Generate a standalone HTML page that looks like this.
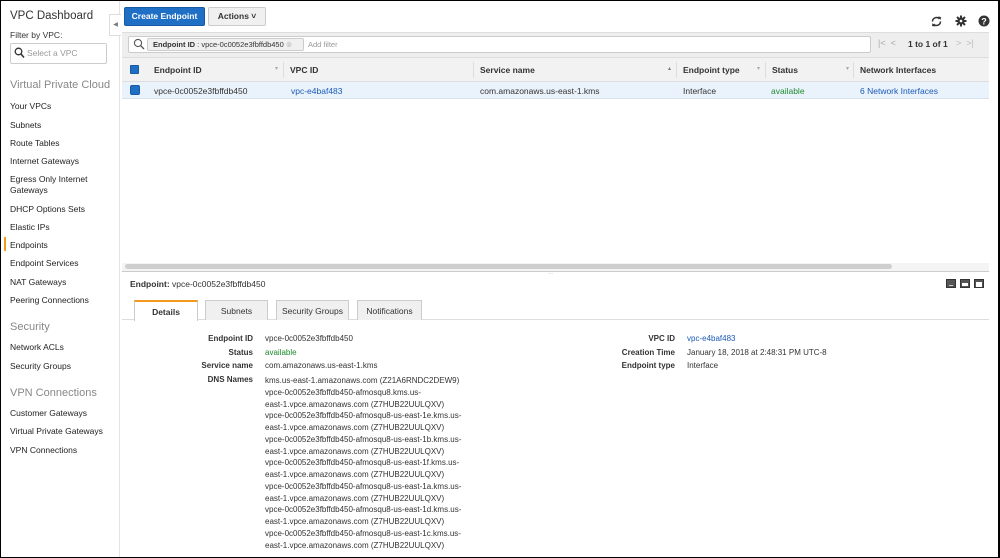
<!DOCTYPE html>
<html><head><style>
*{margin:0;padding:0;box-sizing:border-box}
body{width:1000px;height:558px;overflow:hidden;background:#fff;font-family:"Liberation Sans",sans-serif;color:#222;position:relative}
.a{position:absolute;white-space:nowrap}
.frame{position:absolute;left:0;top:0;width:1000px;height:558px;border:1px solid #000;border-right-width:2px;pointer-events:none}
.nav{font-size:8.5px;color:#222;left:10px}
.hd{font-size:11px;color:#888;left:10px}
.lnk{color:#1a5ab8}
.th{font-size:8.5px;font-weight:bold;color:#333}
.lbl{font-size:8px;font-weight:bold;color:#333;text-align:right;width:120px}
.val{font-size:8px;color:#333}
.tab{position:absolute;top:300px;height:20px;border:1px solid #ccc;border-bottom:none;background:#f0f0f0;font-size:8.5px;text-align:center;line-height:20px;color:#333}
</style></head><body>
<!-- sidebar -->
<div class="a" style="left:0;top:0;width:120px;height:558px;border-right:1px solid #e3e3e3"></div>
<div class="a" style="left:10px;top:10px;font-size:11.5px;color:#333">VPC Dashboard</div>
<div class="a" style="left:10px;top:30px;font-size:8.5px;color:#333">Filter by VPC:</div>
<div class="a" style="left:10px;top:43px;width:97px;height:21px;border:1px solid #ccc;border-radius:2px;font-size:8.5px;color:#999;line-height:19px;padding-left:16px">Select a VPC</div>
<svg class="a" style="left:14px;top:47px" width="11" height="12"><circle cx="4.5" cy="4.5" r="3.3" fill="none" stroke="#333" stroke-width="1.3"/><line x1="7" y1="7" x2="10" y2="10.5" stroke="#333" stroke-width="1.6"/></svg>
<div class="a hd" style="top:79px">Virtual Private Cloud</div>
<div class="a nav" style="top:101px">Your VPCs</div>
<div class="a nav" style="top:120px">Subnets</div>
<div class="a nav" style="top:138px">Route Tables</div>
<div class="a nav" style="top:156px">Internet Gateways</div>
<div class="a nav" style="top:174px;line-height:11px;white-space:normal;width:100px">Egress Only Internet Gateways</div>
<div class="a nav" style="top:204px">DHCP Options Sets</div>
<div class="a nav" style="top:222px">Elastic IPs</div>
<div class="a" style="left:4px;top:237px;width:2px;height:14px;background:#f29a1f"></div>
<div class="a nav" style="top:240px">Endpoints</div>
<div class="a nav" style="top:258px">Endpoint Services</div>
<div class="a nav" style="top:277px">NAT Gateways</div>
<div class="a nav" style="top:295px">Peering Connections</div>
<div class="a hd" style="top:321px">Security</div>
<div class="a nav" style="top:342px">Network ACLs</div>
<div class="a nav" style="top:361px">Security Groups</div>
<div class="a hd" style="top:387px">VPN Connections</div>
<div class="a nav" style="top:408px">Customer Gateways</div>
<div class="a nav" style="top:426px">Virtual Private Gateways</div>
<div class="a nav" style="top:445px">VPN Connections</div>
<!-- collapse -->
<div class="a" style="left:109px;top:14px;width:12px;height:22px;background:#fff;border:1px solid #ddd;border-right:none;font-size:6px;color:#777;line-height:20px;text-align:center">◀</div>
<!-- toolbar -->
<div class="a" style="left:124px;top:7px;width:81px;height:19px;background:#1f6fc5;border:1px solid #175aa3;border-radius:2px;color:#fff;font-size:8.5px;font-weight:bold;text-align:center;line-height:17px">Create Endpoint</div>
<div class="a" style="left:208px;top:7px;width:58px;height:19px;background:#f0f0f0;border:1px solid #ccc;border-radius:2px;color:#333;font-size:8.5px;font-weight:bold;text-align:center;line-height:17px">Actions ˅</div>
<svg class="a" style="left:930px;top:15px" width="13" height="13"><path d="M2.5 6.5a4 4 0 0 1 7-2.6M10.5 6.5a4 4 0 0 1-7 2.6" fill="none" stroke="#333" stroke-width="1.5"/><path d="M8 1.5l3 .5-.5 3zM5 11.5l-3-.5.5-3z" fill="#333"/></svg>
<svg class="a" style="left:955px;top:15px" width="12" height="12"><circle cx="6" cy="6" r="3.6" fill="#333"/><path d="M6 0.5v11M0.5 6h11M2 2l8 8M10 2l-8 8" stroke="#333" stroke-width="2"/><circle cx="6" cy="6" r="1.3" fill="#fff"/></svg>
<svg class="a" style="left:978px;top:15px" width="12" height="12"><circle cx="6" cy="6" r="5.5" fill="#333"/><text x="6" y="9.3" font-size="9" font-weight="bold" fill="#fff" text-anchor="middle" font-family="Liberation Sans">?</text></svg>
<!-- filter bar -->
<div class="a" style="left:122px;top:32px;width:867px;height:25px;background:#eeeeee;border-top:1px solid #ddd"></div>
<div class="a" style="left:128px;top:36px;width:743px;height:17px;background:#fff;border:1px solid #ccc;border-radius:2px"></div>
<svg class="a" style="left:133px;top:38px" width="12" height="12"><circle cx="5" cy="5" r="3.6" fill="none" stroke="#555" stroke-width="1.1"/><line x1="7.7" y1="7.7" x2="11" y2="11" stroke="#555" stroke-width="1.3"/></svg>
<div class="a" style="left:147px;top:38px;width:157px;height:13px;background:#f0f0f0;border:1px solid #ccc;border-radius:2px;font-size:7.5px;line-height:11px;padding-left:5px;color:#333"><b>Endpoint ID</b> : vpce-0c0052e3fbffdb450 <span style="color:#bbb">⊗</span></div>
<div class="a" style="left:308px;top:40px;font-size:7.5px;color:#999">Add filter</div>
<div class="a" style="left:878px;top:38px;font-size:9px;color:#aaa">|&lt; &nbsp;&lt;</div>
<div class="a" style="left:908px;top:39px;font-size:8.5px;font-weight:bold;color:#333">1 to 1 of 1</div>
<div class="a" style="left:956px;top:38px;font-size:9px;color:#bbb">&gt; &nbsp;&gt;|</div>
<!-- table header -->
<div class="a" style="left:122px;top:57px;width:867px;height:25px;background:#f2f2f2;border-top:1px solid #ddd;border-bottom:1px solid #ddd"></div>
<div class="a" style="left:130px;top:65px;width:9px;height:9px;background:#1f6fc5;border:1px solid #175aa3;border-radius:1px"></div>
<div class="a th" style="left:154px;top:65px">Endpoint ID</div>
<div class="a" style="left:275px;top:65px;font-size:6px;color:#aaa">▾</div>
<div class="a" style="left:283px;top:62px;width:1px;height:16px;background:#ddd"></div>
<div class="a th" style="left:290px;top:65px">VPC ID</div>
<div class="a" style="left:473px;top:62px;width:1px;height:16px;background:#ddd"></div>
<div class="a th" style="left:480px;top:65px">Service name</div>
<div class="a" style="left:668px;top:65px;font-size:6px;color:#777">▴</div>
<div class="a" style="left:676px;top:62px;width:1px;height:16px;background:#ddd"></div>
<div class="a th" style="left:683px;top:65px">Endpoint type</div>
<div class="a" style="left:757px;top:65px;font-size:6px;color:#aaa">▾</div>
<div class="a" style="left:765px;top:62px;width:1px;height:16px;background:#ddd"></div>
<div class="a th" style="left:772px;top:65px">Status</div>
<div class="a" style="left:846px;top:65px;font-size:6px;color:#aaa">▾</div>
<div class="a" style="left:853px;top:62px;width:1px;height:16px;background:#ddd"></div>
<div class="a th" style="left:860px;top:65px">Network Interfaces</div>
<!-- row -->
<div class="a" style="left:122px;top:82px;width:867px;height:17px;background:#eaf3fc;border-bottom:1px solid #d6e2ee"></div>
<div class="a" style="left:130px;top:85px;width:10px;height:10px;background:#1f6fc5;border:1px solid #175aa3;border-radius:2px"></div>
<div class="a val" style="left:154px;top:86px;font-size:8.5px">vpce-0c0052e3fbffdb450</div>
<div class="a val lnk" style="left:291px;top:86px;font-size:8.5px;color:#1a5ab8">vpc-e4baf483</div>
<div class="a val" style="left:480px;top:86px;font-size:8.5px">com.amazonaws.us-east-1.kms</div>
<div class="a val" style="left:683px;top:86px;font-size:8.5px">Interface</div>
<div class="a val" style="left:771px;top:86px;font-size:8.5px;color:#1d8b2e">available</div>
<div class="a val" style="left:860px;top:86px;font-size:8.5px;color:#1a5ab8">6 Network Interfaces</div>
<!-- scrollbar -->
<div class="a" style="left:122px;top:263px;width:867px;height:8px;background:#f4f4f4"></div>
<div class="a" style="left:125px;top:264px;width:767px;height:5px;background:#cfcfcf;border-radius:3px"></div>
<div class="a" style="left:122px;top:271px;width:867px;height:1px;background:#ccc"></div>
<div class="a" style="left:548px;top:270px;font-size:6px;color:#bbb">...</div>
<!-- detail -->
<div class="a" style="left:130px;top:279px;font-size:8.5px;color:#333"><b>Endpoint:</b> vpce-0c0052e3fbffdb450</div>
<div class="a" style="left:946px;top:279px;width:10px;height:9px;background:#555;border:1px solid #333"><div style="position:absolute;left:2px;top:5px;width:4px;height:1px;background:#ccc"></div></div>
<div class="a" style="left:960px;top:279px;width:10px;height:9px;background:#555;border:1px solid #333"><div style="position:absolute;left:1px;top:3px;width:6px;height:3px;background:#fff"></div></div>
<div class="a" style="left:974px;top:279px;width:10px;height:9px;background:#555;border:1px solid #333"><div style="position:absolute;left:1px;top:2px;width:6px;height:5px;background:#fff"></div></div>
<div class="a" style="left:122px;top:319px;width:867px;height:1px;background:#ddd"></div>
<div class="tab" style="left:134px;width:64px;background:#fff;border-top:2px solid #f29a1f;font-weight:bold;height:21px">Details</div>
<div class="tab" style="left:205px;width:63px">Subnets</div>
<div class="tab" style="left:276px;width:73px">Security Groups</div>
<div class="tab" style="left:357px;width:65px">Notifications</div>
<div class="a lbl" style="left:133px;top:334px">Endpoint ID</div>
<div class="a lbl" style="left:133px;top:348px">Status</div>
<div class="a lbl" style="left:133px;top:361px">Service name</div>
<div class="a lbl" style="left:133px;top:375px">DNS Names</div>
<div class="a val" style="left:265px;top:334px">vpce-0c0052e3fbffdb450</div>
<div class="a val" style="left:265px;top:348px;color:#1d8b2e">available</div>
<div class="a val" style="left:265px;top:361px">com.amazonaws.us-east-1.kms</div>
<div class="a val" style="left:265px;top:375px;line-height:11.75px">kms.us-east-1.amazonaws.com (Z21A6RNDC2DEW9)<br>vpce-0c0052e3fbffdb450-afmosqu8.kms.us-<br>east-1.vpce.amazonaws.com (Z7HUB22UULQXV)<br>vpce-0c0052e3fbffdb450-afmosqu8-us-east-1e.kms.us-<br>east-1.vpce.amazonaws.com (Z7HUB22UULQXV)<br>vpce-0c0052e3fbffdb450-afmosqu8-us-east-1b.kms.us-<br>east-1.vpce.amazonaws.com (Z7HUB22UULQXV)<br>vpce-0c0052e3fbffdb450-afmosqu8-us-east-1f.kms.us-<br>east-1.vpce.amazonaws.com (Z7HUB22UULQXV)<br>vpce-0c0052e3fbffdb450-afmosqu8-us-east-1a.kms.us-<br>east-1.vpce.amazonaws.com (Z7HUB22UULQXV)<br>vpce-0c0052e3fbffdb450-afmosqu8-us-east-1d.kms.us-<br>east-1.vpce.amazonaws.com (Z7HUB22UULQXV)<br>vpce-0c0052e3fbffdb450-afmosqu8-us-east-1c.kms.us-<br>east-1.vpce.amazonaws.com (Z7HUB22UULQXV)</div>
<div class="a lbl" style="left:555px;top:334px">VPC ID</div>
<div class="a lbl" style="left:555px;top:348px">Creation Time</div>
<div class="a lbl" style="left:555px;top:361px">Endpoint type</div>
<div class="a val" style="left:687px;top:334px;color:#1a5ab8">vpc-e4baf483</div>
<div class="a val" style="left:687px;top:348px">January 18, 2018 at 2:48:31 PM UTC-8</div>
<div class="a val" style="left:687px;top:361px">Interface</div>
<div class="frame"></div>
</body></html>
